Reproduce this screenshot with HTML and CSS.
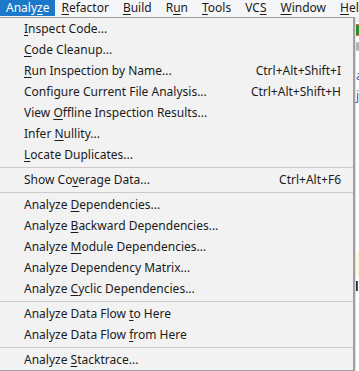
FILE: index.html
```html
<!DOCTYPE html>
<html lang="en">

<head>
    <meta charset="utf-8">
    <title>Analyze menu</title>
    <link rel="stylesheet" href="styles.css">
</head>

<body>

    <nav class="menubar">
        <span class="top valgt">Analy<u>z</u>e</span>
        <span class="top"><u>R</u>efactor</span>
        <span class="top"><u>B</u>uild</span>
        <span class="top">R<u>u</u>n</span>
        <span class="top"><u>T</u>ools</span>
        <span class="top">VC<u>S</u></span>
        <span class="top"><u>W</u>indow</span>
        <span class="top"><u>H</u>elp</span>
    </nav>

    <div class="app">
        <ul class="dropdown">
            <li><span><u>I</u>nspect Code...</span></li>
            <li><span><u>C</u>ode Cleanup...</span></li>
            <li><span><u>R</u>un Inspection by Name...</span><span class="key">Ctrl+Alt+Shift+I</span></li>
            <li><span>Configure Current File Analysis...</span><span class="key">Ctrl+Alt+Shift+H</span></li>
            <li><span>View <u>O</u>ffline Inspection Results...</span></li>
            <li><span>Infer <u>N</u>ullity...</span></li>
            <li><span><u>L</u>ocate Duplicates...</span></li>
            <li class="sep"></li>
            <li><span>Show Co<u>v</u>erage Data...</span><span class="key">Ctrl+Alt+F6</span></li>
            <li class="sep"></li>
            <li><span>Analyze <u>D</u>ependencies...</span></li>
            <li><span>Analyze <u>B</u>ackward Dependencies...</span></li>
            <li><span>Analyze <u>M</u>odule Dependencies...</span></li>
            <li><span>Analyze Dependency Matrix...</span></li>
            <li><span>Analyze <u>C</u>yclic Dependencies...</span></li>
            <li class="sep"></li>
            <li><span>Analyze Data Flow <u>t</u>o Here</span></li>
            <li><span>Analyze Data Flow <u>f</u>rom Here</span></li>
            <li class="sep"></li>
            <li><span>Analyze <u>S</u>tacktrace...</span></li>
        </ul>

        <div class="side">
            <div class="strip"></div>
            <div class="run-icon"></div>
            <div class="tabbar"></div>
            <div class="code">
                <span class="blue">a</span>
                <span class="blue">j</span>
            </div>
            <div class="cream"></div>
            <div class="marks"></div>
        </div>
    </div>

</body>

</html>
```

FILE: styles.css
```css
* {
    box-sizing: border-box;
}

body {
    margin: 0;
    width: 359px;
    height: 371px;
    overflow: hidden;
    background-color: #ffffff;
    font-family: 'Noto Sans', 'Segoe UI', sans-serif;
    font-size: 12px;
    color: #1b1b1b;
}

u {
    text-decoration-thickness: 1px;
    text-underline-offset: 2px;
}

.menubar {
    display: flex;
    height: 17px;
    background-color: #f5f6f7;
    white-space: nowrap;
    overflow: hidden;
}

.top {
    padding: 0 7px;
    line-height: 16px;
    height: 16px;
}

.valgt {
    padding: 0 6px;
    margin-right: -1px;
    background-color: #1c78c8;
    color: #ffffff;
}

.app {
    display: flex;
    height: 354px;
}

.dropdown {
    list-style-type: none;
    margin: 0;
    padding: 0;
    width: 355px;
    height: 354px;
    background-color: #f2f2f2;
    border-top: 1px solid #a0a0a0;
    border-right: 2px solid #a0a0a0;
    border-bottom: 1px solid #a0a0a0;
    flex-shrink: 0;
}

.dropdown li {
    display: flex;
    justify-content: space-between;
    height: 21px;
    line-height: 21px;
    padding: 0 12px 0 24px;
    white-space: nowrap;
}

.dropdown li.sep {
    height: 1px;
    margin: 2px 0 1px 0;
    padding: 0;
    background-color: #cacaca;
}

.side {
    flex: 1;
    display: flex;
    flex-direction: column;
    background-color: #ffffff;
    border-left: 1px solid #e0e0e0;
}

.strip {
    height: 5px;
    background-color: #f0f0f0;
}

.run-icon {
    height: 12px;
    margin: 2px 0 6px 0;
    border-radius: 0 6px 6px 0;
    background-color: #2d8a2d;
    border: 1px solid #e0662a;
    border-left: none;
}

.tabbar {
    height: 9px;
    background-color: #adb5bb;
    border-top: 1px solid #c8c8c8;
    border-bottom: 1px solid #c8c8c8;
}

.code {
    height: 200px;
    display: flex;
    flex-direction: column;
    padding-top: 18px;
    gap: 6px;
    line-height: 14px;
    font-size: 12px;
}

.blue {
    color: #3050d0;
}

.cream {
    height: 26px;
    background-color: #fdf6e0;
}

.marks {
    height: 10px;
    margin-top: 4px;
    background: linear-gradient(90deg, #202840 0 1px, #c03030 1px 2px, #ffffff 2px 3px, #f0c040 3px);
}
```
